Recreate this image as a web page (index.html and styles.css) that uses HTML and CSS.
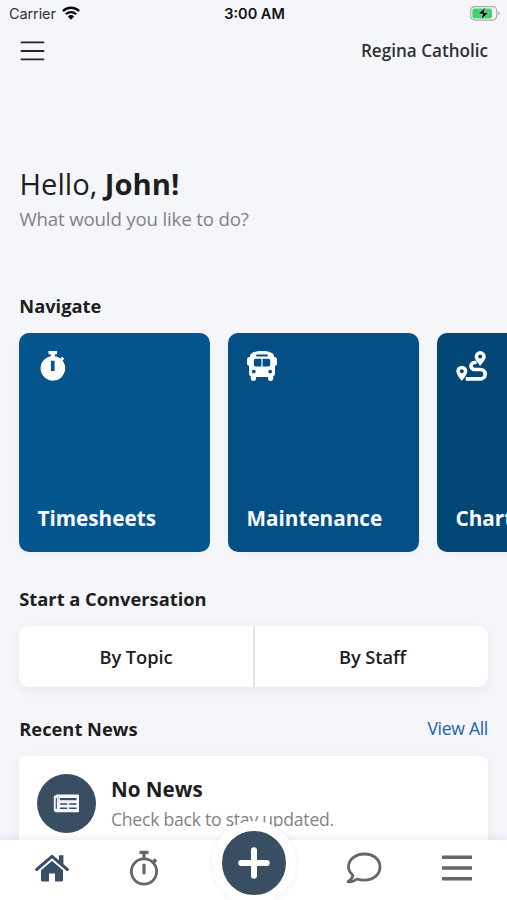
FILE: index.html
```html
<!DOCTYPE html>
<html lang="en">
<head>
<meta charset="utf-8">
<title>Home</title>
<link rel="stylesheet" href="styles.css">
</head>
<body>
<div class="app">
  <div class="status">
    <div class="carrier"><span>Carrier</span>
      <svg class="wifi" viewBox="0 0 18 14"><g fill="none" stroke="#08090b" stroke-width="2.3"><path d="M.9 5.1a11.5 11.5 0 0 1 16.2 0"/><path d="M3.9 8.2a7.2 7.2 0 0 1 10.2 0"/></g><path fill="#08090b" d="M9 13.7 5.9 10.4a4.4 4.4 0 0 1 6.2 0z"/></svg>
    </div>
    <time class="clock">3:00 AM</time>
    <svg class="battery" viewBox="0 0 30 15"><rect x=".7" y=".7" width="26" height="13.4" rx="4" fill="#f5f6fa" stroke="#a9aaad" stroke-width="1.2"/><rect x="2.4" y="2.4" width="19.5" height="10" rx="2" fill="#3ed268"/><path fill="#a9aaad" d="M28.2 5.2q3 2.2 0 4.4z"/><path d="M15.500 1.200 8 8h4.600L11 13.700 18.700 6.600H14z" fill="#08090b" stroke="#eef8f0" stroke-width=".5"/></svg>
  </div>
  <header class="topbar">
    <button class="menu" aria-label="Menu"><svg viewBox="0 0 24 20"><path d="M1 1.4h22M1 10h22M1 18.4h22" stroke="#242528" stroke-width="1.8" stroke-linecap="round"/></svg></button>
    <span class="school">Regina Catholic</span>
  </header>
  <main>
    <section class="hero">
      <h1>Hello, <b>John!</b></h1>
      <p>What would you like to do?</p>
    </section>
    <h2 class="nav-title">Navigate</h2>
    <div class="cards">
      <a class="card c1">
        <svg viewBox="0 0 32 32"><path fill="#fff" fill-rule="evenodd" d="M10.500 .9h8.500v3.400h-2.200v1.900a12 12 0 0 1 5.600 2.200l1.800-1.600 2 2-1.600 2A12.300 12.300 0 1 1 12.800 6.200V4.300h-2.300zM12.900 10.700v10.300h3.700V10.700z"/></svg>
        <span>Timesheets</span>
      </a>
      <a class="card c2">
        <svg viewBox="0 0 32 32"><path fill="#fff" fill-rule="evenodd" d="M15 1C8 1 3 3 3 6v1.200A2.500 2.500 0 0 0 0 9v5a2 2 0 0 0 2 1.700V24q0 1.500 1.800 2.200v2.600a2.100 2.100 0 0 0 2.100 2.100h1a2.100 2.100 0 0 0 2.100-2.100V27h12v1.800a2.100 2.100 0 0 0 2.100 2.100h1a2.100 2.100 0 0 0 2.100-2.100v-2.600Q28 25.500 28 24v-8.300a2 2 0 0 0 2-1.700V9a2.500 2.500 0 0 0-3-1.800V6c0-3-5-5-12-5zM10 4.600h10a.8.8 0 0 1 0 1.800H10a.8.8 0 0 1 0-1.800zM8.500 8.800h5.900v7.700H8.500A1.700 1.700 0 0 1 6.800 14.800v-4.300A1.700 1.700 0 0 1 8.500 8.800zm7.100 0h5.900a1.700 1.700 0 0 1 1.700 1.700v4.300a1.700 1.700 0 0 1-1.700 1.700h-5.900zM6.800 19.700a1.900 1.900 0 1 1 0 3.800 1.900 1.900 0 0 1 0-3.800zm16.400 0a1.900 1.900 0 1 1 0 3.800 1.900 1.900 0 0 1 0-3.800z"/></svg>
        <span>Maintenance</span>
      </a>
      <a class="card c3">
        <svg viewBox="0 0 32 32"><path fill="#fff" fill-rule="evenodd" d="M24.200 1a5.600 5.600 0 0 1 5.600 5.600c0 3-4 7.300-5.600 9.300-1.600-2-5.600-6.300-5.600-9.300A5.600 5.600 0 0 1 24.200 1zm0 3.600a2 2 0 1 0 0 4 2 2 0 0 0 0-4zM5.800 15.700a5.500 5.500 0 0 1 5.500 5.500c0 2.700-3.700 7.700-5.500 9.500C4 28.900.3 23.900.3 21.200a5.500 5.500 0 0 1 5.500-5.500zm0 3.500a2 2 0 1 0 0 4 2 2 0 0 0 0-4z"/><path d="M20.600 12.500h-2.100a3.500 3.500 0 0 0 0 7h6a4.600 4.600 0 0 1 0 9.300H9.700" fill="none" stroke="#fff" stroke-width="3.700"/></svg>
        <span>Charter</span>
      </a>
    </div>
    <h2 class="talk-title">Start a Conversation</h2>
    <div class="segmented"><a>By Topic</a><a>By Staff</a></div>
    <div class="news-head"><h2>Recent News</h2><a>View All</a></div>
    <article class="news">
      <div class="badge"><svg viewBox="0 0 27 19"><path d="M4 2.500H1.800v12.700a2.100 2.100 0 0 0 2.100 2.100H25V1.500H4v13.700a1.900 1.900 0 0 1-1.900 1.900" fill="none" stroke="#f4f8fc" stroke-width="2" stroke-linejoin="round"/><path fill="#f4f8fc" d="M5.500 2H25v15H4.500z"/><path d="M3.400 3.800v11" stroke="#3a4e63" stroke-width="1"/><path d="M7 5.100h16.500" stroke="#3a4e63" stroke-width="2.200"/><path d="M7 9.900h7.300M16.200 9.900h7.300M7 14.200h7.300M16.200 14.200h7.300" stroke="#3a4e63" stroke-width="1.500"/></svg></div>
      <div class="news-text"><h3>No News</h3><p>Check back to stay updated.</p></div>
    </article>
  </main>
  <nav class="tabs">
    <a><svg class="home" viewBox="0 0 34 28"><path d="M1.700 15.500 17 2.400l15.300 13.100" fill="none" stroke="#3a4e68" stroke-width="3" stroke-linecap="round" stroke-linejoin="round"/><path fill="#3a4e68" d="M24 1.200h4.400V12L24 8.200zM6 15.600 17 6.200l11 9.400V26a1.600 1.600 0 0 1-1.600 1.600H20v-8h-6v8H7.600A1.600 1.600 0 0 1 6 26z"/><path d="M5 16.300 17 6l12 10.300" fill="none" stroke="#fff" stroke-width="1.200"/></svg></a>
    <a><svg class="watch" viewBox="0 0 30 36"><g fill="none" stroke="#656668"><circle cx="15" cy="21.500" r="12.600" stroke-width="2.800"/><path d="M10.500 2.300h9M15 2v7M15 13.800v10.500" stroke-width="3.200"/><path d="m24 12.500 3-3" stroke-width="3.500"/></g></svg></a>
    <a class="add" aria-label="Add"><svg viewBox="0 0 32 32"><path d="M16 3.200v25.600M3.200 16h25.600" stroke="#fff" stroke-width="6" stroke-linecap="round"/></svg></a>
    <a><svg class="chat" viewBox="0 0 36 32"><path d="M18.500 2C9.500 2 2.500 7.500 2.500 15c0 3 1.700 5.800 4.500 8.200-.5 2.500-2.700 4.800-5 6.500 4 .3 7-1 9-2.700a20 20 0 0 0 7.500 1.200c9 0 15.500-5.700 15.500-13.200S27.500 2 18.500 2z" fill="none" stroke="#656668" stroke-width="2.800" stroke-linejoin="round"/></svg></a>
    <a><svg class="bars" viewBox="0 0 32 28"><path d="M1 3.200h30M1 14h30M1 24.800h30" stroke="#656668" stroke-width="3.400"/></svg></a>
  </nav>
</div>
</body>
</html>
```
FILE: styles.css
```css
* { box-sizing: border-box; }
html, body { margin: 0; height: 100%; overflow: hidden; }
body { font-family: "Open Sans", "Noto Sans", sans-serif; color: #1d1e21; background: #f5f6fa; }
h1, h2, h3, p { margin: 0; font-weight: 400; }
svg { display: block; }
a { color: inherit; text-decoration: none; }
.app { width: 507px; height: 900px; display: flex; flex-direction: column; overflow: hidden; }
.status { height: 27px; flex: none; display: grid; grid-template-columns: 1fr auto 1fr; align-items: center; padding: 0 7px 0 9px; font-family: Inter, sans-serif; font-size: 14.500px; }
.carrier { display: flex; align-items: center; gap: 6px; color: #303134; letter-spacing: -.1px; }
.wifi { width: 18px; height: 14px; margin-top: -1px; }
.clock { font-weight: 600; color: #111; }
.battery { width: 30px; height: 15px; justify-self: end; }
.topbar { height: 47px; flex: none; display: flex; align-items: center; justify-content: space-between; padding: 0 19px 0 20px; }
.menu { border: 0; padding: 0; background: none; }
.menu svg { width: 25px; height: 20px; }
.school { font-size: 17.100px; font-weight: 550; color: #303134; }
main { flex: 1; min-height: 0; overflow: hidden; padding: 0 19px; }
.hero { height: 216px; padding: 90px 0 0 .5px; }
h1 { font-size: 29.200px; line-height: 40px; }
h1 b { font-weight: 700; }
.hero p { font-size: 18.700px; line-height: 29px; letter-spacing: -.18px; color: #828387; }
h2 { font-size: 18.300px; line-height: 32px; font-weight: 700; padding-left: .3px; }
.cards { display: flex; gap: 18px; margin-top: 11px; }
.card { width: 191px; height: 218.500px; flex: none; border-radius: 10px; padding: 17px 18px 16px 18.500px; display: flex; flex-direction: column; justify-content: space-between; color: #f8fcff; font-size: 20.700px; line-height: 36px; font-weight: 700; box-shadow: 0 2px 10px #20304008; }
.card svg { width: 32px; height: 32px; }
.c1 { background: #05558f; }
.c2 { background: #044f85; }
.c3 { background: #034777; }
.talk-title { margin-top: 31px; }
.segmented { display: grid; grid-template-columns: 234px 1fr; height: 61px; margin-top: 11.500px; border-radius: 10px; background: #fff; box-shadow: 0 3px 12px #20304010; }
.segmented a { display: grid; place-items: center; padding-bottom: 1px; font-size: 18.300px; letter-spacing: -.06px; font-weight: 550; }
.segmented a + a { border-left: 2px solid #e4e4e6; padding-left: 2px; }
.news-head { display: flex; justify-content: space-between; align-items: center; margin-top: 26px; }
.news-head a { font-size: 17.600px; line-height: 24px; margin-top: -2px; letter-spacing: -.3px; color: #1b649f; }
.news { display: flex; gap: 15px; height: 130px; margin-top: 11px; padding: 18px; border-radius: 8px; background: #fff; box-shadow: 0 3px 12px #20304010; }
.badge { width: 59px; height: 59px; flex: none; border-radius: 50%; display: grid; place-items: center; background: #3a4e63; }
.badge svg { width: 27px; height: 19px; }
h3 { font-size: 20.600px; line-height: 30px; font-weight: 700; }
.news-text p { font-size: 17.600px; line-height: 30px; letter-spacing: -.25px; color: #828387; }
.tabs { height: 60px; flex: none; display: grid; grid-template-columns: 91px 94px 125px 96px 89px; padding-left: 6px; background: #fff; box-shadow: 0 -1px 7px #2030401c; position: relative; }
.tabs a { display: grid; place-items: center; }
.home { width: 34px; height: 28px; margin-top: -9px; }
.watch { width: 30px; height: 36px; margin-top: -9px; }
.chat { width: 36px; height: 32px; margin-top: -9px; }
.bars { width: 32px; height: 28px; margin-top: -9px; }
.tabs .add { width: 84px; height: 84px; margin: -19px auto 0; border: 10px solid #fff; border-radius: 50%; background: #3a4e63; box-shadow: 0 0 5px #20304018; }
.add svg { width: 32px; height: 32px; }
```
